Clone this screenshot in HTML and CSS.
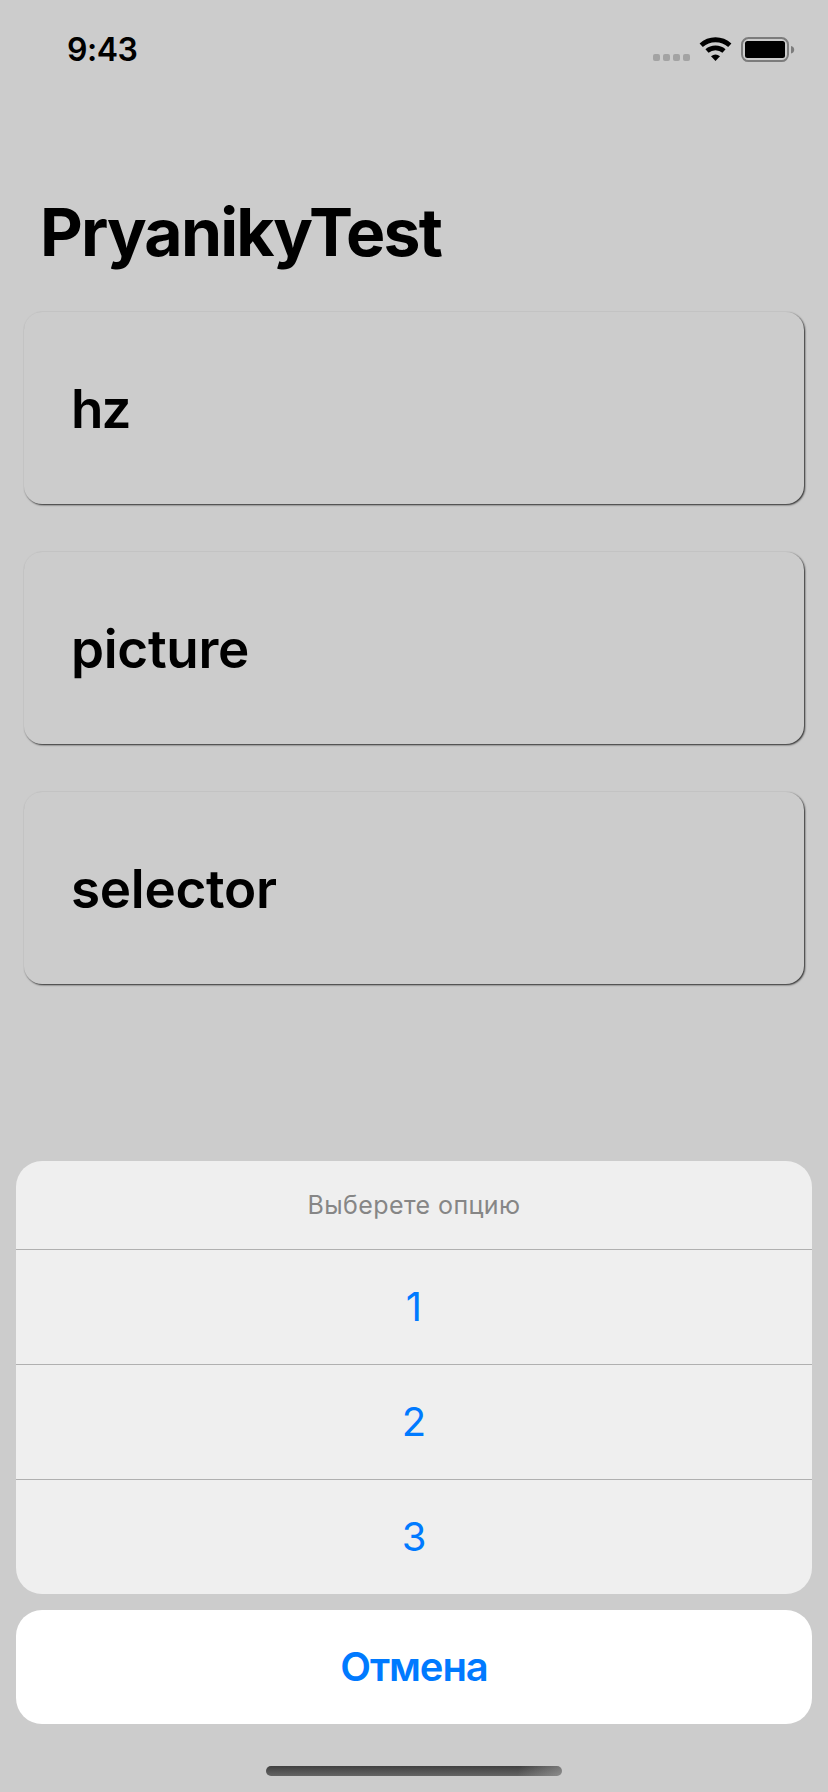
FILE: index.html
```html
<!DOCTYPE html>
<html lang="ru">
<head>
<meta charset="utf-8">
<title>PryanikyTest</title>
<link rel="stylesheet" href="styles.css">
</head>
<body>
<div class="screen">
  <header class="status-bar">
    <span class="time">9:43</span>
    <svg class="status-icons" width="142" height="28" viewBox="0 0 142 28" aria-hidden="true">
      <g fill="#a3a3a3">
        <rect x="0" y="17" width="7" height="7" rx="2"/>
        <rect x="10" y="17" width="7" height="7" rx="2"/>
        <rect x="20" y="17" width="7" height="7" rx="2"/>
        <rect x="30" y="17" width="7" height="7" rx="2"/>
      </g>
      <path d="M48.2 8.3A21.2 21.2 0 0 1 76.8 8.3" fill="none" stroke="#000" stroke-width="4.8"/>
      <path d="M54 14A13 13 0 0 1 71 14" fill="none" stroke="#000" stroke-width="4.8"/>
      <path d="M58 19.2A7.2 7.2 0 0 1 67 19.2L62.5 24Z"/>
      <rect x="89" y="1.1" width="46" height="23" rx="6.5" fill="none" stroke="#7c7c7c" stroke-width="2"/>
      <rect x="92" y="4" width="40" height="17" rx="2.5"/>
      <path d="M138 9Q141.2 9.8 141.2 12.7Q141.2 15.6 138 16.5Z" fill="#7c7c7c"/>
    </svg>
  </header>
  <h1 class="title">PryanikyTest</h1>
  <main class="cards">
    <div class="card"><span class="label label-short">hz</span></div>
    <div class="card"><span class="label">picture</span></div>
    <div class="card"><span class="label">selector</span></div>
  </main>
  <section class="sheet">
    <div class="options">
      <div class="prompt">Выберете опцию</div>
      <div class="option">1</div>
      <div class="option">2</div>
      <div class="option">3</div>
    </div>
    <div class="cancel">Отмена</div>
  </section>
  <div class="home-indicator"></div>
</div>
</body>
</html>
```
FILE: styles.css
```css
* { box-sizing: border-box; }
body { margin: 0; background: #ccc; }
.screen {
  width: 828px;
  height: 1792px;
  display: flex;
  flex-direction: column;
  background: #ccc;
  color: #000;
  font-family: Inter, "Liberation Sans", sans-serif;
  overflow: hidden;
}
.status-bar {
  height: 88px;
  flex: none;
  display: flex;
  justify-content: space-between;
  align-items: flex-start;
  padding: 30px 33px 0 67px;
}
.time { font-size: 32px; line-height: 40px; font-weight: 600; letter-spacing: -0.5px; }
.status-icons { display: block; margin-top: 7px; }
.title {
  margin: 104px 0 0 40px;
  height: 80px;
  font-size: 66px;
  line-height: 80px;
  font-weight: 700;
  letter-spacing: -1.8px;
}
.cards {
  margin: 40px 24px 0;
  display: flex;
  flex-direction: column;
  gap: 48px;
}
.card {
  height: 192px;
  display: flex;
  align-items: center;
  padding: 1px 48px 0 47px;
  border-radius: 18px;
  background: #ccc;
  box-shadow: 1px 1px 2px rgba(0, 0, 0, 0.8);
}
.label { font-size: 53px; line-height: 64px; font-weight: 600; letter-spacing: -0.3px; }
.label-short { letter-spacing: -2px; }
.sheet {
  margin: auto 16px 0;
  display: flex;
  flex-direction: column;
  gap: 16px;
  text-align: center;
}
.options { border-radius: 26px; background: #efefef; overflow: hidden; }
.prompt { height: 88px; line-height: 89px; font-size: 25px; letter-spacing: 0.4px; color: #868686; }
.option {
  height: 115px;
  border-top: 1px solid #b0b0b0;
  line-height: 114px;
  font-size: 40px;
  color: #007aff;
}
.cancel {
  height: 114px;
  border-radius: 26px;
  background: #fff;
  line-height: 114px;
  font-size: 40px;
  font-weight: 600;
  letter-spacing: -1.1px;
  color: #007aff;
}
.home-indicator {
  flex: none;
  width: 296px;
  height: 10px;
  margin: 42px auto 16px;
  border-radius: 5px;
  background:
    linear-gradient(100deg, transparent 85%, rgba(180, 180, 180, 0.5) 100%),
    linear-gradient(#404040, #646464);
}
```
